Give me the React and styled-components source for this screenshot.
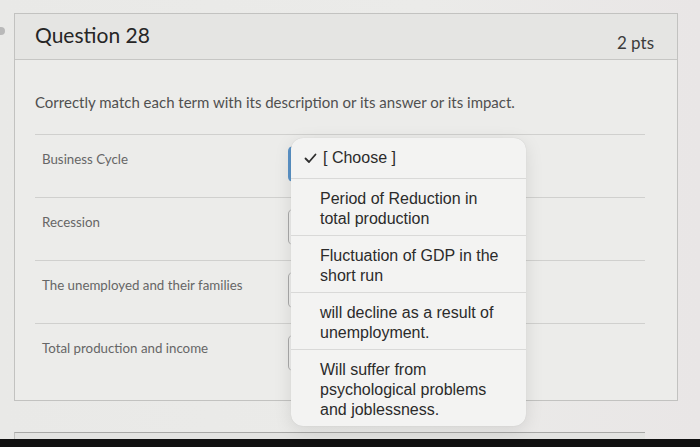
import React from 'react';
import styled, { createGlobalStyle } from 'styled-components';

const GlobalStyle = createGlobalStyle`
    html, body {
        margin: 0;
        padding: 0;
        background: #e7e7e5;
    }
`;

const terms = [
    "Business Cycle",
    "Recession",
    "The unemployed and their families",
    "Total production and income"
];

const options = [
    ["Period of Reduction in", "total production"],
    ["Fluctuation of GDP in the", "short run"],
    ["will decline as a result of", "unemployment."],
    ["Will suffer from", "psychological problems", "and joblessness."]
];

const App = () => {
    return (
        <Page>
            <GlobalStyle />
            <SideDot />
            <Card>
                <CardHeader>
                    <Title>Question 28</Title>
                    <Points>2 pts</Points>
                </CardHeader>
                <CardBody>
                    <Prompt>Correctly match each term with its description or its answer or its impact.</Prompt>
                    <MatchList>
                        {terms.map((term, i) => (
                            <MatchRow key={term} last={i === terms.length - 1}>
                                <Term>{term}</Term>
                                <SelectBox focused={i === 0} />
                            </MatchRow>
                        ))}
                        <Dropdown>
                            <ChosenItem>
                                <svg width="13" height="11" viewBox="0 0 13 11">
                                    <polyline points="1.5,5.5 5,9 11.5,1.5" fill="none" stroke="#2e2e2e" strokeWidth="1.8" strokeLinecap="round" strokeLinejoin="round" />
                                </svg>
                                <span>[ Choose ]</span>
                            </ChosenItem>
                            {options.map((lines) => (
                                <OptionItem key={lines[0]}>
                                    {lines.map((line) => (
                                        <div key={line}>{line}</div>
                                    ))}
                                </OptionItem>
                            ))}
                        </Dropdown>
                    </MatchList>
                </CardBody>
            </Card>
            <NextCard />
            <Bezel />
        </Page>
    );
};

export default App;

// Styled Components
const Page = styled.div`
    position: relative;
    height: 447px;
    overflow: hidden;
    padding: 13px 0 0 14px;
    box-sizing: border-box;
    background: linear-gradient(90deg, #e9e9e7 0%, #ebebe9 60%, #e9e6e6 100%);
    font-family: Lato, "Open Sans", sans-serif;
`;

const SideDot = styled.div`
    position: absolute;
    left: -3px;
    top: 27px;
    width: 8px;
    height: 8px;
    border-radius: 50%;
    background: #b9b9b9;
`;

const Card = styled.div`
    width: 664px;
    background: #ececea;
    border: 1px solid #c2c2c0;
    box-sizing: border-box;
`;

const CardHeader = styled.div`
    display: flex;
    justify-content: space-between;
    align-items: flex-start;
    height: 45px;
    padding: 0 23px 0 20px;
    background: #e5e5e3;
    border-bottom: 1px solid #c6c6c4;
`;

const Title = styled.h2`
    margin: 8px 0 0;
    font-size: 21px;
    font-weight: 400;
    color: #262626;
`;

const Points = styled.span`
    margin-top: 18px;
    font-size: 17px;
    color: #3c3c3c;
`;

const CardBody = styled.div`
    padding: 0 32px 11px 20px;
`;

const Prompt = styled.p`
    margin: 32px 0 22px;
    font-size: 15px;
    line-height: 20px;
    color: #505050;
`;

const MatchList = styled.div`
    position: relative;
    border-top: 1px solid #d0d0ce;
`;

const MatchRow = styled.div`
    display: grid;
    grid-template-columns: 253px 1fr;
    height: ${({ last }) => (last ? '65px' : '62px')};
    border-bottom: ${({ last }) => (last ? 'none' : '1px solid #d0d0ce')};
`;

const Term = styled.div`
    padding: 15px 0 0 7px;
    font-size: 13.3px;
    line-height: 18px;
    color: #666;
`;

const SelectBox = styled.div`
    margin-top: 11px;
    width: 230px;
    height: 36px;
    box-sizing: border-box;
    border: 1px solid #c4c4c4;
    border-left: ${({ focused }) => (focused ? '3px solid #5b93c7' : '1px solid #a9a9a9')};
    border-radius: 5px;
    background: #efefed;
`;

const Dropdown = styled.div`
    position: absolute;
    left: 256px;
    top: 3px;
    width: 235px;
    background: #f3f3f2;
    border-radius: 12px;
    box-shadow: 0 4px 18px rgba(0, 0, 0, 0.1), 0 0 1px rgba(0, 0, 0, 0.15);
    font-family: "Liberation Sans", Arial, sans-serif;
    font-size: 16px;
    color: #2b2b2b;
    overflow: hidden;
`;

const ChosenItem = styled.div`
    display: flex;
    align-items: center;
    gap: 6px;
    height: 40px;
    padding-left: 13px;
`;

const OptionItem = styled.div`
    padding: 10px 14px 6px 29px;
    line-height: 20px;
    border-top: 1px solid #d9d9d8;
`;

const NextCard = styled.div`
    margin-top: 31px;
    width: 630px;
    height: 6px;
    background: #e3e3e1;
    border-top: 1px solid #a8a8a6;
    border-left: 1px solid #c2c2c0;
`;

const Bezel = styled.div`
    height: 30px;
    margin-left: -14px;
    background: #111;
`;
